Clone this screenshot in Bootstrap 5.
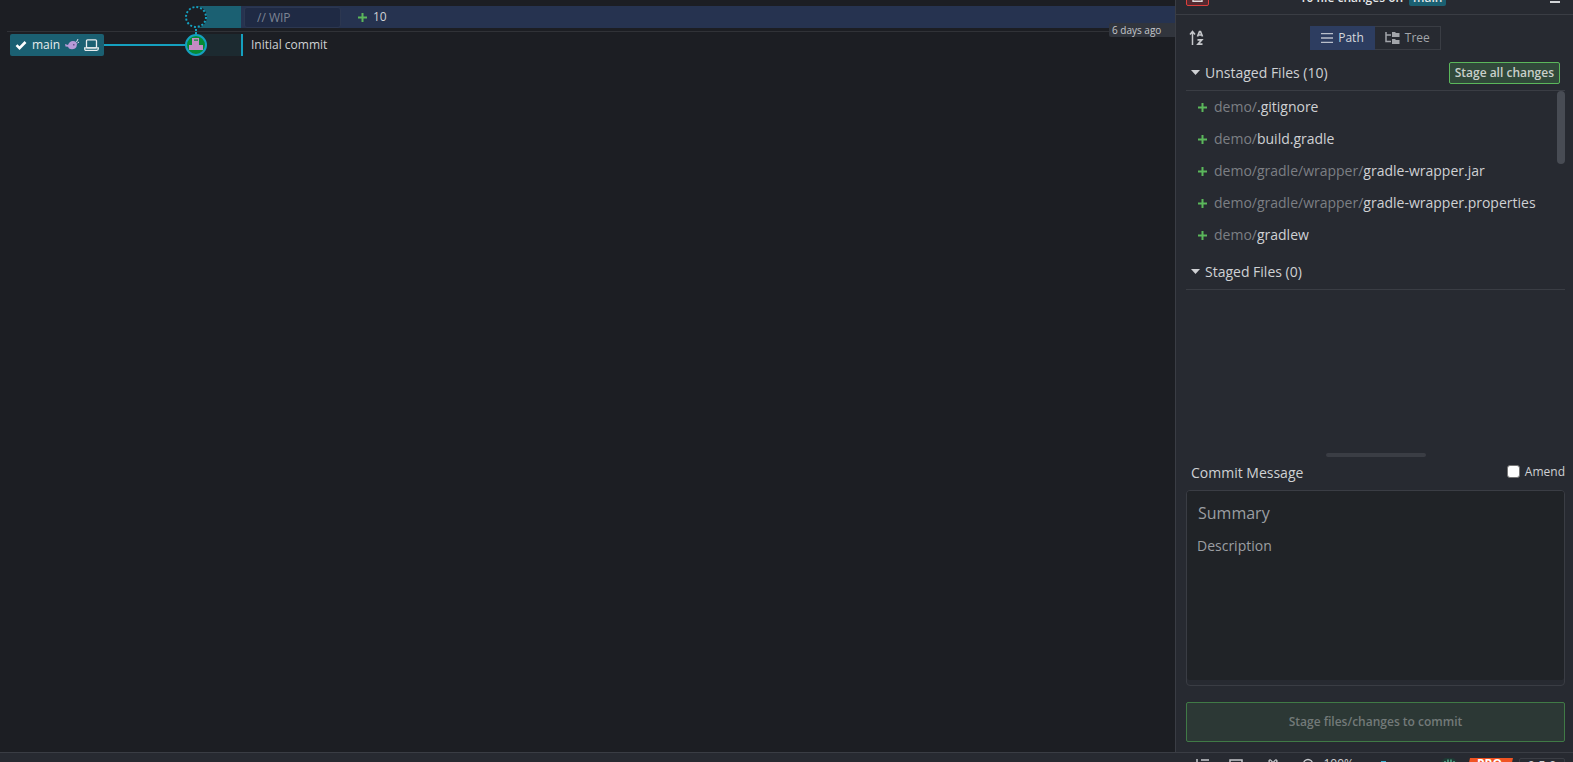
<!DOCTYPE html>
<html lang="en" data-bs-theme="dark">
<head>
<meta charset="utf-8">
<meta name="viewport" content="width=device-width, initial-scale=1">
<title>Commit graph</title>
<link rel="stylesheet" href="https://cdn.jsdelivr.net/npm/bootstrap@5.3.0/dist/css/bootstrap.min.css">
<style>
  body { font-family: "Open Sans", "Noto Sans", sans-serif; font-size: 14px; line-height: 20px; color: #cfd1d4; background: #1c1e23; }
  svg { display: block; flex: none; }
  button, input, textarea { font-family: inherit; }
  .workspace { min-height: 0; }

  /* Commit graph */
  .graph-pane { padding-top: 6px; min-width: 0; }
  .graph-row { height: 22px; font-size: 12px; }
  .ref-col { flex: 0 0 185px; padding-left: 10px; }
  .node-col { flex: 0 0 56px; }
  .ref-chip { height: 22px; width: 94px; background: #1b6072; color: #e8ecee; border-radius: 2px; padding: 0 5px; gap: 5px; font-weight: 500; }
  .ref-link { height: 2px; background: #15a0bf; }
  .wip-node { background: linear-gradient(90deg, transparent 11px, #1b6072 11px); }
  .commit-node { background: linear-gradient(90deg, transparent 11px, #1c2a30 11px); }
  .wip-msg { background: #263350; padding-left: 3px; }
  .wip-input { width: 97px; height: 21px; font-size: 12px; font-weight: 500; padding: 0 12px; color: #8f96a5; background: #1f2a44; border: 1px solid #2c3750; border-radius: 3px; }
  .wip-input::placeholder { color: #7d8493; opacity: 1; }
  .wip-count { gap: 5px; padding-left: 16px; font-weight: 500; }
  .commit-msg { border-left: 2px solid #15a0bf; padding-left: 8px; }
  .divider { height: 1px; margin: 3px 0 2px 7px; background: #303237; }
  .age-tag { right: 0; top: -8px; width: 66px; height: 14px; padding-left: 3px; font-size: 10px; line-height: 14px; font-weight: 500; background: #31353d; border-radius: 2px 0 0 2px; color: #c4c7cb; }

  /* Commit panel */
  .commit-panel { flex: 0 0 398px; background: #272a31; border-left: 1px solid #3a3d44; }
  .panel-body { padding: 0 8px 10px 10px; }
  .panel-head { height: 15px; padding: 0 13px 8px 10px; border-bottom: 1px solid #3a3d44; color: #e4e6e8; font-size: 12px; line-height: 16px; font-weight: 600; }
  .panel-title { gap: 6px; }
  .discard, .panel-menu { width: 23px; height: 22px; }
  .discard { border: 1px solid #dd3f3c; background: #552a30; border-radius: 2px; color: #ddd; }
  .branch-tag { padding: 0 4px; background: #1b6072; border-radius: 2px; }
  .view-bar { display: grid; grid-template-columns: 1fr auto 1fr; padding: 11px 0 8px; }
  .sort-btn { justify-self: start; margin-left: 3px; }
  .view-btn { height: 24px; padding: 0 10px; font-size: 12px; line-height: 22px; gap: 5px; border: 1px solid #3a3d44; color: #a2a5aa; border-radius: 0; }
  .view-btn.active, .view-btn.active:hover { background: #2d3d60; border-color: #2d3d60; color: #d5d8dd; }
  .section-head { padding: 0 5px; border-bottom: 1px solid #3a3d44; }
  .unstaged-head { height: 33px; padding-bottom: 3px; }
  .staged-head { height: 39px; padding-top: 3px; }
  .fold { gap: 5px; font-size: 14px; line-height: 20px; color: #cfd1d4; }
  .stage-btn { height: 22px; padding: 0 5px; font-size: 12px; line-height: 18px; font-weight: 600; color: #c9cfca; background: #31493a; border: 1px solid #5bb75b; border-radius: 2px; }
  .file-list { height: 160px; }
  .file-list li { height: 32px; padding-left: 12px; gap: 7px; }
  .dir { color: #7c7f84; }
  .thumb { right: 0; top: 0; width: 8px; height: 73px; border-radius: 4px; background: #484c54; }
  .grip { width: 100px; height: 4px; border-radius: 2px; background: #3a3d44; }
  .message-head { height: 33px; padding: 0 0 2px 5px; }
  .amend { font-size: 12px; gap: 5px; padding-bottom: 2px; }
  .amend input { width: 13px; height: 13px; margin: 0; border: 1px solid #767676; border-radius: 2px; background-color: #fff; }
  .message-box { height: 196px; border: 1px solid #3a3d44; border-radius: 4px; padding-bottom: 5px; }
  .message-box input, .message-box textarea { border: 0; outline: 0; color: #cfd1d4; background: #202327; padding: 0 10px; resize: none; }
  .message-box input { height: 44px; font-size: 16px; border-radius: 3px 3px 0 0; padding-left: 11px; }
  .message-box textarea { font-size: 14px; border-radius: 0 0 3px 3px; padding-top: 1px; }
  .message-box ::placeholder { color: #9b9ea2; opacity: 1; }
  .submit-btn { height: 40px; margin-top: 16px; font-size: 12px; font-weight: 600; border-radius: 2px; }
  .submit-btn:disabled { opacity: 1; color: #737a79; background: #2c3835; border-color: #407a46; }

  /* Status bar */
  .status { height: 10px; background: #272a31; border-top: 1px solid #3a3d44; font-size: 12px; line-height: 12px; padding: 5px 8px 0 0; }
  .plan { width: 47px; height: 18px; background: #f05423; color: #fff; font-weight: 700; clip-path: polygon(4px 0, 100% 0, 43px 100%, 0 100%); }
  .version { width: 46px; height: 20px; border: 1px solid #3a3d44; border-radius: 2px; margin-left: 6px; font-size: 13px; font-weight: 500; }
</style>
</head>
<body class="vh-100 overflow-hidden d-flex flex-column">
<div class="workspace d-flex flex-grow-1">
  <main class="graph-pane flex-grow-1">
    <div class="graph-row d-flex">
      <div class="ref-col"></div>
      <div class="node-col wip-node">
        <svg width="22" height="22" viewBox="0 0 22 22"><circle cx="11" cy="11" r="11" fill="#1c1e23"/><circle cx="11" cy="11" r="10" fill="none" stroke="#15a0bf" stroke-width="2" stroke-dasharray="2 1.927"/></svg>
      </div>
      <div class="wip-msg d-flex align-items-center flex-grow-1">
        <input class="wip-input" type="text" placeholder="// WIP" aria-label="Work in progress message">
        <span class="wip-count d-flex align-items-center"><svg width="11" height="11" viewBox="0 0 11 11" stroke="#5bb75b" stroke-width="2"><path d="M5.500 1v9M1 5.500h9"/></svg>10</span>
      </div>
    </div>
    <div class="divider position-relative"><span class="age-tag position-absolute">6 days ago</span></div>
    <div class="graph-row d-flex">
      <div class="ref-col d-flex align-items-center">
        <div class="ref-chip d-flex align-items-center">
          <svg width="12" height="12" viewBox="0 0 12 12"><path d="M1.500 6.200 4.500 9.200 10.500 3" fill="none" stroke="#fff" stroke-width="2.600"/></svg>
          <span>main</span>
          <svg width="14" height="12" viewBox="0 0 14 12"><path d="M0 5 3 6Q4.500 2 8 2q3.500 0 4 3 0 3-2 4.500-3 1.500-6 0L3 7.800.5 7.500Z" fill="#b79ad8"/><path d="M11.500 3 13 0M12.500 4 14 3" stroke="#e7dcf2"/><path d="M8 5h1.500v1.500H8z" fill="#68508b"/></svg>
          <svg width="15" height="12" viewBox="0 0 15 12" fill="none" stroke="#e8ecee" stroke-width="1.300"><rect x="2.500" y=".8" width="10" height="8" rx="1"/><path d="M.7 8.800h13.600v1q0 1.500-1.500 1.500H2.200Q.7 11.300.7 9.800Z"/></svg>
        </div>
        <div class="ref-link flex-grow-1"></div>
      </div>
      <div class="node-col commit-node">
        <svg class="overflow-visible" width="22" height="22" viewBox="0 0 22 22"><path d="M11-5V0" stroke="#15a0bf" stroke-width="2"/><circle cx="11" cy="11" r="10" fill="#078a35" stroke="#15a0bf" stroke-width="2"/><path d="M7 4h7v7h4v5H4v-5h3Z" fill="#c48bc4"/><path d="M9 5.500h4v1.200H9z" fill="#078a35"/></svg>
      </div>
      <div class="commit-msg flex-grow-1 d-flex align-items-center">Initial commit</div>
    </div>
  </main>

  <aside class="commit-panel d-flex flex-column">
    <header class="panel-head d-flex justify-content-between align-items-end">
      <button class="discard p-0 d-flex justify-content-center align-items-end" type="button" aria-label="Discard all changes">
        <svg width="11" height="16" viewBox="0 0 11 16" fill="none" stroke="currentColor" stroke-width="1.400"><path d="M1 3v9.300h9V3M0 2.500h11M4 5v5M7 5v5"/></svg>
      </button>
      <div class="panel-title d-flex align-items-end"><span>10 file changes on</span><span class="branch-tag">main</span></div>
      <button class="panel-menu btn p-0 border-0 d-flex justify-content-end align-items-end" type="button" aria-label="Panel menu">
        <svg width="10" height="15" viewBox="0 0 10 15" stroke="#d2d4d7" stroke-width="2"><path d="M0 3h10M0 7h10M0 11h10"/></svg>
      </button>
    </header>
    <div class="panel-body d-flex flex-column flex-grow-1">
      <div class="view-bar align-items-center">
        <button class="sort-btn btn p-0 border-0" type="button" aria-label="Sort by name">
          <svg width="15" height="16" viewBox="0 0 15 16" fill="none" stroke="#c6c8cc"><path d="M3.500 15V2M1 4.500 3.500 1.500 6 4.500" stroke-width="1.500"/><path d="M8.500 6.500 10.500 1.500h1L13.500 6.500M9.500 5h3M8.500 9.800h4.300L9 14.200h4.500" stroke-width="1.700"/></svg>
        </button>
        <div class="btn-group" role="group" aria-label="File view">
          <button class="btn view-btn active d-flex align-items-center" type="button"><svg width="12" height="10" viewBox="0 0 12 10" stroke="#b9bfca"><path d="M0 .5h12M0 5h12M0 9.500h12" stroke-width="1.300"/></svg>Path</button>
          <button class="btn view-btn d-flex align-items-center" type="button"><svg width="15" height="12" viewBox="0 0 15 12"><path d="M1 0v9.500h5M1 3h5" fill="none" stroke="#a2a5aa" stroke-width="1.500"/><path d="M7 0h3l1 1h3.500v4H7ZM7 7h3l1 1h3.500v4H7Z" fill="#a2a5aa"/></svg>Tree</button>
        </div>
      </div>
      <div class="section-head unstaged-head d-flex align-items-center justify-content-between">
        <button class="btn p-0 border-0 fold d-flex align-items-center" type="button"><svg width="9" height="5" viewBox="0 0 9 5"><path d="M0 0h9L4.500 5Z" fill="#cfd1d4"/></svg><span>Unstaged Files (10)</span></button>
        <button class="btn stage-btn" type="button">Stage all changes</button>
      </div>
      <div class="position-relative">
        <ul class="file-list list-unstyled m-0 overflow-hidden">
          <li class="d-flex align-items-center"><svg width="9" height="9" viewBox="0 0 9 9" stroke="#5bb75b" stroke-width="2"><path d="M4.500 0v9M0 4.500h9"/></svg><span><span class="dir">demo/</span><span class="file">.gitignore</span></span></li>
          <li class="d-flex align-items-center"><svg width="9" height="9" viewBox="0 0 9 9" stroke="#5bb75b" stroke-width="2"><path d="M4.500 0v9M0 4.500h9"/></svg><span><span class="dir">demo/</span><span class="file">build.gradle</span></span></li>
          <li class="d-flex align-items-center"><svg width="9" height="9" viewBox="0 0 9 9" stroke="#5bb75b" stroke-width="2"><path d="M4.500 0v9M0 4.500h9"/></svg><span><span class="dir">demo/gradle/wrapper/</span><span class="file">gradle-wrapper.jar</span></span></li>
          <li class="d-flex align-items-center"><svg width="9" height="9" viewBox="0 0 9 9" stroke="#5bb75b" stroke-width="2"><path d="M4.500 0v9M0 4.500h9"/></svg><span><span class="dir">demo/gradle/wrapper/</span><span class="file">gradle-wrapper.properties</span></span></li>
          <li class="d-flex align-items-center"><svg width="9" height="9" viewBox="0 0 9 9" stroke="#5bb75b" stroke-width="2"><path d="M4.500 0v9M0 4.500h9"/></svg><span><span class="dir">demo/</span><span class="file">gradlew</span></span></li>
        </ul>
        <span class="thumb position-absolute"></span>
      </div>
      <div class="section-head staged-head d-flex align-items-center">
        <button class="btn p-0 border-0 fold d-flex align-items-center" type="button"><svg width="9" height="5" viewBox="0 0 9 5"><path d="M0 0h9L4.500 5Z" fill="#cfd1d4"/></svg><span>Staged Files (0)</span></button>
      </div>
      <div class="flex-grow-1"></div>
      <div class="grip mx-auto"></div>
      <div class="message-head d-flex align-items-center justify-content-between">
        <label for="summary">Commit Message</label>
        <label class="amend d-flex align-items-center"><input class="form-check-input" type="checkbox">Amend</label>
      </div>
      <div class="message-box d-flex flex-column">
        <input id="summary" type="text" placeholder="Summary">
        <textarea class="flex-grow-1" placeholder="Description" aria-label="Description"></textarea>
      </div>
      <button class="btn submit-btn w-100" type="button" disabled>Stage files/changes to commit</button>
    </div>
  </aside>
</div>
<footer class="status d-flex justify-content-end align-items-start">
  <svg class="me-3" width="13" height="14" viewBox="0 0 13 14" fill="none" stroke="#c6c8cc" stroke-width="1.500"><path d="M1 1v11M5 2h8M5 7h8"/></svg>
  <svg class="ms-1 me-4" width="14" height="14" viewBox="0 0 14 14" fill="none" stroke="#c6c8cc" stroke-width="1.500"><rect x="1" y="2" width="12" height="9"/></svg>
  <svg class="me-4" width="12" height="14" viewBox="0 0 12 14" fill="none" stroke="#c6c8cc" stroke-width="1.300"><path d="M6 5Q2 5 2 3q1-3 4 2 3-5 4-2 0 2-4 2M1 5h10v8H1Z"/></svg>
  <svg class="me-2" width="12" height="14" viewBox="0 0 12 14" fill="none" stroke="#c6c8cc" stroke-width="1.300"><circle cx="5" cy="6" r="4.500"/><path d="m8 9 4 4"/></svg>
  <span>100%</span>
  <svg class="ms-4 me-5" width="14" height="14" viewBox="0 0 14 14"><path d="M3 3h5v5H3z" fill="#3fb3d1"/></svg>
  <svg class="me-2" width="18" height="18" viewBox="0 0 18 18"><circle cx="9" cy="8" r="9" fill="#1e3833"/><path d="M5 9V3M8 10V1.500M11 10V1.500M14 9V3" stroke="#5dbf9d" stroke-width="1.300"/></svg>
  <span class="plan text-center">PRO</span>
  <span class="version text-center">9.5.0</span>
</footer>
<script src="https://cdn.jsdelivr.net/npm/bootstrap@5.3.0/dist/js/bootstrap.bundle.min.js"></script>
</body>
</html>
